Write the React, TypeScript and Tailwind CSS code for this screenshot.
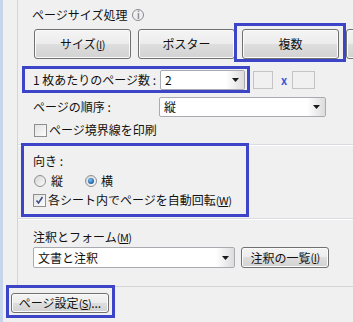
import React from "react";

const BLUE = "border-[#3c44c8]";

const Arrow = () => (
  <svg width="7" height="4" viewBox="0 0 7 4">
    <path d="M0 0h7L3.5 4z" fill="#1a1a1a" />
  </svg>
);

const WinButton = ({
  children,
  className = "",
}: {
  children?: React.ReactNode;
  className?: string;
}) => (
  <div
    className={`flex shrink-0 items-center justify-center rounded-[3px] border border-[#707070] bg-[linear-gradient(#f4f4f4,#ececec_50%,#dedede_50%,#d2d2d2)] shadow-[inset_0_0_0_1px_#fbfbfb] text-[#111] ${className}`}
  >
    {children}
  </div>
);

const Select = ({ value, className = "" }: { value: string; className?: string }) => (
  <div
    className={`flex shrink-0 items-stretch rounded-[2px] border border-[#a9abb1] bg-white ${className}`}
  >
    <span className="flex flex-1 items-center pl-[4px] leading-none">{value}</span>
    <span className="flex w-[18px] items-center justify-center bg-[linear-gradient(90deg,#ffffff,#dcdcdc)]">
      <Arrow />
    </span>
  </div>
);

const Checkbox = ({ checked = false }: { checked?: boolean }) => (
  <span className="flex h-[13px] w-[13px] shrink-0 items-center justify-center border border-[#8e8f8f] bg-[linear-gradient(135deg,#e3e3e3,#fbfbfb)]">
    {checked && (
      <svg width="9" height="9" viewBox="0 0 9 9">
        <path d="M1.5 4.5l2 2.5 4-6" fill="none" stroke="#3a4f8a" strokeWidth="1.6" />
      </svg>
    )}
  </span>
);

const Radio = ({ checked = false }: { checked?: boolean }) => (
  <span className="flex h-[12px] w-[12px] shrink-0 items-center justify-center rounded-full border border-[#8e8f8f] bg-[linear-gradient(135deg,#d6d6d6,#fafafa)]">
    {checked && (
      <span className="h-[6px] w-[6px] rounded-full bg-[radial-gradient(circle_at_40%_35%,#7cc4f4,#1a5fa8_70%)]" />
    )}
  </span>
);

const Mn = ({ k }: { k: string }) => (
  <span className="text-[11px] tracking-[-0.5px]">
    (<u>{k}</u>)
  </span>
);

const Separator = ({ className = "" }: { className?: string }) => (
  <div className={`h-[2px] border-t border-[#d9dce0] bg-white ${className}`} />
);

export default function App() {
  return (
    <div className="relative flex h-[322px] w-[353px] overflow-hidden bg-[#f0f0f0] font-['Noto_Sans_CJK_JP','Noto_Sans',sans-serif] text-[12px] text-[#111]">
      {/* left window edge */}
      <div className="w-[3px] shrink-0 bg-[#c6d6ea]" />

      <div className="flex flex-1 flex-col">
        {/* panel */}
        <div className="ml-[14px] flex h-[287px] flex-col border-b border-l border-[#d5d5d5]">
          <div className="pl-[14px] pt-[7px]">
            <div className="flex h-[16px] items-center gap-[5px]">
              <span>ページサイズ処理</span>
              <span className="flex h-[12px] w-[12px] items-center justify-center rounded-full border border-[#8a8a8a] text-[9px] font-bold leading-none text-[#8a8a8a]">
                i
              </span>
            </div>

            <div className="mt-[6px] flex gap-[7px] pl-[2px]">
              <WinButton className="h-[30px] w-[97px]">
                サイズ<Mn k="I" />
              </WinButton>
              <WinButton className="h-[30px] w-[97px]">ポスター</WinButton>
              <WinButton className="h-[30px] w-[97px]">複数</WinButton>
              <WinButton className="h-[30px] w-[97px]" />
            </div>

            <div className="mt-[11px] flex h-[20px] items-center pl-[1px]">
              <span className="w-[127px] shrink-0">1 枚あたりのページ数 :</span>
              <Select value="2" className="h-[20px] w-[85px]" />
              <span className="ml-[8px] h-[18px] w-[20px] border border-[#c4c4c4] bg-[#f0f0f0]" />
              <span className="ml-[8px] text-[11px] font-bold text-[#3d5bd8]">x</span>
              <span className="ml-[5px] h-[18px] w-[23px] border border-[#c4c4c4] bg-[#f0f0f0]" />
            </div>

            <div className="mt-[7px] flex h-[20px] items-center pl-[1px]">
              <span className="w-[126px] shrink-0">ページの順序 :</span>
              <Select value="縦" className="h-[20px] w-[167px]" />
            </div>

            <div className="mt-[6px] flex h-[14px] items-center gap-[2px] pl-[2px]">
              <Checkbox />
              <span>ページ境界線を印刷</span>
            </div>
          </div>

          <Separator className="mt-[7px]" />

          <div className="pl-[14px]">
            <div className="mt-[8px] flex h-[14px] items-center pl-[1px]">向き :</div>
            <div className="mt-[6px] flex h-[14px] items-center pl-[2px]">
              <Radio />
              <span className="ml-[5px]">縦</span>
              <span className="ml-[22px] flex">
                <Radio checked />
              </span>
              <span className="ml-[4px]">横</span>
            </div>
            <div className="mt-[5px] flex h-[14px] items-center gap-[2px] pl-[1px]">
              <Checkbox checked />
              <span>
                各シート内でページを自動回転<Mn k="W" />
              </span>
            </div>
          </div>

          <Separator className="mt-[11px]" />

          <div className="pl-[15px]">
            <div className="mt-[10px] flex h-[14px] items-center">
              注釈とフォーム<Mn k="M" />
            </div>
            <div className="mt-[3px] flex h-[21px] items-center gap-[6px]">
              <Select value="文書と注釈" className="h-[21px] w-[202px]" />
              <WinButton className="h-[21px] w-[88px]">
                注釈の一覧<Mn k="I" />
              </WinButton>
            </div>
          </div>
        </div>

        {/* bottom bar */}
        <div className="mt-[6px] pl-[8px]">
          <WinButton className="h-[20px] w-[98px]">
            ページ設定<Mn k="S" />...
          </WinButton>
        </div>
      </div>

      {/* annotation highlights */}
      <div className={`pointer-events-none absolute left-[234px] top-[23px] h-[39px] w-[112px] border-[3px] ${BLUE}`} />
      <div className={`pointer-events-none absolute left-[22px] top-[66px] h-[27px] w-[228px] border-[3px] ${BLUE}`} />
      <div className={`pointer-events-none absolute left-[21px] top-[143px] h-[74px] w-[228px] border-[3px] ${BLUE}`} />
      <div className={`pointer-events-none absolute left-[6px] top-[285px] h-[33px] w-[109px] border-[3px] ${BLUE}`} />
    </div>
  );
}
